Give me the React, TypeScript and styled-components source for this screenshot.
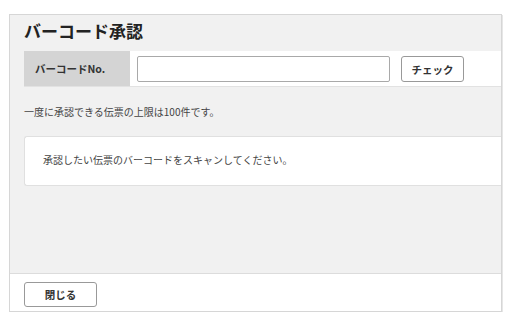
import styled, { createGlobalStyle } from "styled-components";
import { useState } from "react";

const GlobalStyle = createGlobalStyle`
  body {
    margin: 0;
    background: #fff;
    font-family: "Noto Sans CJK JP", "Liberation Sans", sans-serif;
    color: #333;
  }
`;

const App = () => {
  const [barcode, setBarcode] = useState("");

  return (
    <>
      <GlobalStyle />
      <Panel>
        <Title>バーコード承認</Title>
        <BarcodeRow>
          <Label>バーコードNo.</Label>
          <Field>
            <Input value={barcode} onChange={(e) => setBarcode(e.target.value)} />
            <Button>チェック</Button>
          </Field>
        </BarcodeRow>
        <Note>一度に承認できる伝票の上限は100件です。</Note>
        <Message>承認したい伝票のバーコードをスキャンしてください。</Message>
        <Footer>
          <CloseButton>閉じる</CloseButton>
        </Footer>
      </Panel>
    </>
  );
};

const Panel = styled.div`
  box-sizing: border-box;
  display: flex;
  flex-direction: column;
  margin: 14px 0 0 9px;
  width: 493px;
  height: 298px;
  background: #f1f1f1;
  border: 1px solid #d6d6d6;
  box-shadow: 1px 1px 0 #e6e6e6;
  overflow: hidden;
`;

const Title = styled.h1`
  margin: 0;
  height: 36px;
  padding-left: 14px;
  font-size: 17px;
  font-weight: bold;
  line-height: 31px;
  color: #222;
`;

const BarcodeRow = styled.div`
  display: flex;
  height: 35px;
  margin-left: 14px;
  background: #fff;
  border-bottom: 1px solid #e2e2e2;
`;

const Label = styled.div`
  width: 106px;
  padding-left: 11px;
  box-sizing: border-box;
  background: #d4d4d4;
  font-size: 10.5px;
  font-weight: bold;
  line-height: 35px;
  color: #333;
`;

const Field = styled.div`
  display: flex;
  align-items: flex-start;
  gap: 11px;
  padding: 5px 0 0 7px;
`;

const Input = styled.input`
  box-sizing: border-box;
  width: 253px;
  height: 26px;
  border: 1px solid #a9a9a9;
  border-radius: 2px;
  padding: 0 6px;
  font-size: 12px;
  outline: none;
`;

const Button = styled.button`
  box-sizing: border-box;
  width: 63px;
  height: 26px;
  background: #fff;
  border: 1px solid #999;
  border-radius: 3px;
  font-family: inherit;
  font-size: 10.5px;
  font-weight: bold;
  color: #333;
  padding: 0;
  cursor: pointer;
`;

const Note = styled.p`
  margin: 16px 0 0 14px;
  font-size: 10px;
  line-height: 17px;
  color: #444;
`;

const Message = styled.div`
  margin: 16px 0 0 14px;
  height: 50px;
  box-sizing: border-box;
  padding-left: 18px;
  background: #fff;
  border: 1px solid #e0e0e0;
  border-right: none;
  border-radius: 3px 0 0 3px;
  font-size: 10px;
  line-height: 46px;
  color: #444;
`;

const Footer = styled.div`
  margin-top: auto;
  height: 38px;
  box-sizing: border-box;
  padding: 6px 0 0 14px;
  background: #fff;
  border-top: 1px solid #dcdcdc;
`;

const CloseButton = styled(Button)`
  width: 73px;
  height: 25px;
`;

export default App;
